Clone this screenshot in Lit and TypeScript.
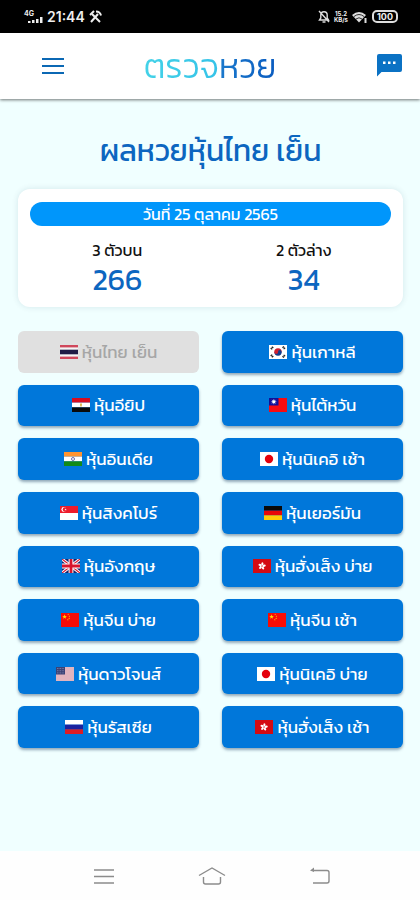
import { LitElement, html, css, svg, nothing } from "lit";
import { customElement, property } from "lit/decorators.js";

const star = (cx: number, cy: number, r: number, fill: string) => {
  const pts = Array.from({ length: 10 }, (_, i) => {
    const a = (Math.PI / 5) * i - Math.PI / 2;
    const d = i % 2 ? r * 0.4 : r;
    return `${(cx + d * Math.cos(a)).toFixed(2)},${(cy + d * Math.sin(a)).toFixed(2)}`;
  }).join(" ");
  return svg`<polygon points=${pts} fill=${fill}></polygon>`;
};

const bands = (...colors: string[]) =>
  colors.map((c, i) => svg`<rect x="0" y=${(i * 14) / colors.length} width="18" height=${14 / colors.length} fill=${c}></rect>`);

const flags: Record<string, unknown> = {
  th: svg`<rect width="18" height="14" fill="#d0485c"></rect><rect y="2.4" width="18" height="9.2" fill="#f4f4f4"></rect><rect y="4.7" width="18" height="4.6" fill="#201c46"></rect>`,
  eg: svg`${bands("#d80d20", "#ffffff", "#0a0a0a")}<path d="M8 5.4h2l-.3 3H8.300z" fill="#d8b040"></path>`,
  in: svg`${bands("#ff9430", "#ffffff", "#128a18")}<circle cx="9" cy="7" r="1.500" fill="none" stroke="#4a4a9a" stroke-width=".8"></circle>`,
  sg: svg`${bands("#ee1c2c", "#ffffff")}<circle cx="3.800" cy="3.500" r="2.400" fill="#fff"></circle><circle cx="4.900" cy="3.500" r="2.200" fill="#ee1c2c"></circle>${star(5.6, 3.6, 1.2, "#fff")}`,
  gb: svg`<rect width="18" height="14" fill="#15246e"></rect><path d="M0 0L18 14M18 0L0 14" stroke="#fff" stroke-width="3"></path><path d="M0 0L18 14M18 0L0 14" stroke="#d8142c" stroke-width="1.100"></path><path d="M9 0V14M0 7H18" stroke="#fff" stroke-width="4.800"></path><path d="M9 0V14M0 7H18" stroke="#d8142c" stroke-width="2.800"></path>`,
  cn: svg`<rect width="18" height="14" fill="#f80b05"></rect>${star(3.6, 3.8, 2.5, "#ffd800")}${star(7.2, 1.5, 0.9, "#ffd800")}${star(8.4, 3.2, 0.9, "#ffd800")}${star(8.2, 5.3, 0.9, "#ffd800")}${star(6.8, 6.8, 0.9, "#ffd800")}`,
  us: svg`<rect width="18" height="14" fill="#f2dfe4"></rect><path d="M0 1H18M0 3H18M0 5H18M0 7H18M0 9H18M0 11H18M0 13H18" stroke="#d08a98" stroke-width="1"></path><rect width="9" height="7.500" fill="#3a4276"></rect><path d="M1 1.500H8M1 3.700H8M1 5.900H8" stroke="#9aa0c4" stroke-width=".7" stroke-dasharray=".8 .8"></path>`,
  ru: svg`${bands("#ffffff", "#1a22a0", "#dc1c24")}`,
  kr: svg`<rect width="18" height="14" fill="#fff"></rect><path d="M5.300 7a3.700 3.700 0 0 1 7.400 0z" fill="#d02030"></path><path d="M5.300 7a3.700 3.700 0 0 0 7.400 0z" fill="#143c8c"></path><circle cx="7.200" cy="7.200" r="1.800" fill="#d02030"></circle><circle cx="10.800" cy="6.800" r="1.800" fill="#143c8c"></circle><path d="M2 4.200L4.200 1.700M13.800 1.700L16 4.200M2 9.800L4.200 12.300M13.800 12.300L16 9.800" stroke="#222" stroke-width="2" stroke-dasharray="1.300 .4"></path>`,
  tw: svg`<rect width="18" height="14" fill="#f80b10"></rect><rect width="9.500" height="7.500" fill="#10109a"></rect><circle cx="4.800" cy="3.700" r="1.500" fill="#fff"></circle><path d="M4.800 1.200V6.200M2.300 3.700H7.300M3 1.900L6.600 5.500M6.600 1.900L3 5.500" stroke="#fff" stroke-width=".6"></path>`,
  jp: svg`<rect width="18" height="14" fill="#fff"></rect><circle cx="9" cy="7" r="4.200" fill="#e4000c"></circle>`,
  de: svg`${bands("#0a0a0a", "#e80808", "#ffcc08")}`,
  hk: svg`<rect width="18" height="14" fill="#d40a12"></rect>${[0, 72, 144, 216, 288].map(
    (a) => svg`<ellipse cx="9.400" cy="5" rx="1.100" ry="1.800" fill="#fff" transform="rotate(${a} 9 7)"></ellipse>`
  )}<circle cx="9" cy="7" r=".6" fill="#d40a12"></circle>`,
};

@customElement("market-button")
class MarketButton extends LitElement {
  @property() flag = "";
  @property() label = "";
  @property({ type: Boolean }) current = false;

  static styles = css`
    :host { display: flex; min-width: 0; }
    button {
      flex: 1;
      display: flex;
      align-items: center;
      justify-content: center;
      gap: 4px;
      min-width: 0;
      padding: 0 8px;
      border: 0;
      border-radius: 6px;
      background: #0077da;
      color: #fff;
      font: 400 17px/24px Kanit, Prompt, "Noto Sans Thai", "Noto Sans", sans-serif;
      white-space: nowrap;
      box-shadow: 0 2px 3px rgba(0, 40, 80, 0.4);
      cursor: pointer;
    }
    button:disabled {
      background: #e0e0e0;
      color: #a6a6a6;
      box-shadow: none;
      cursor: default;
    }
    svg { flex: none; width: 18px; height: 14px; }
  `;

  render() {
    return html`<button type="button" ?disabled=${this.current}>
      <svg viewBox="0 0 18 14" aria-hidden="true">${flags[this.flag] ?? nothing}</svg>
      <span>${this.label}</span>
    </button>`;
  }
}

@customElement("app-root")
class AppRoot extends LitElement {
  private markets = [
    { flag: "th", label: "หุ้นไทย เย็น", current: true },
    { flag: "kr", label: "หุ้นเกาหลี" },
    { flag: "eg", label: "หุ้นอียิป" },
    { flag: "tw", label: "หุ้นไต้หวัน" },
    { flag: "in", label: "หุ้นอินเดีย" },
    { flag: "jp", label: "หุ้นนิเคอิ เช้า" },
    { flag: "sg", label: "หุ้นสิงคโปร์" },
    { flag: "de", label: "หุ้นเยอร์มัน" },
    { flag: "gb", label: "หุ้นอังกฤษ" },
    { flag: "hk", label: "หุ้นฮั่งเส็ง บ่าย" },
    { flag: "cn", label: "หุ้นจีน บ่าย" },
    { flag: "cn", label: "หุ้นจีน เช้า" },
    { flag: "us", label: "หุ้นดาวโจนส์" },
    { flag: "jp", label: "หุ้นนิเคอิ บ่าย" },
    { flag: "ru", label: "หุ้นรัสเซีย" },
    { flag: "hk", label: "หุ้นฮั่งเส็ง เช้า" },
  ];

  static styles = css`
    :host {
      display: flex;
      flex-direction: column;
      min-height: 100vh;
      background: #f0ffff;
      color: #111;
      font-family: Kanit, Prompt, "Noto Sans Thai", "Noto Sans", sans-serif;
    }
    svg { display: block; }
    .status {
      display: flex;
      align-items: center;
      justify-content: space-between;
      height: 33px;
      padding: 0 22px 0 24px;
      background: #000;
      color: #eee;
    }
    .status-group { display: flex; align-items: center; gap: 4px; }
    .signal { display: flex; flex-direction: column; font: 700 7px/7px Inter, sans-serif; }
    .bars { align-self: flex-end; margin-left: 4px; }
    .clock { font: 600 14px/16px Inter, sans-serif; }
    .rate { font: 700 6px/6px Inter, sans-serif; text-align: center; }
    .battery {
      padding: 0 3px;
      border: 2px solid #ddd;
      border-radius: 5px;
      font: 700 9px/9px Inter, sans-serif;
    }
    .top {
      display: grid;
      grid-template-columns: 1fr auto 1fr;
      align-items: center;
      height: 66px;
      padding: 0 16px;
      background: #fff;
      box-shadow: 0 1px 3px rgba(0, 0, 0, 0.55);
      position: relative;
    }
    .icon {
      display: block;
      padding: 0;
      border: 0;
      background: none;
      cursor: pointer;
    }
    .menu { justify-self: start; margin-left: 25px; }
    .chat { justify-self: end; }
    .logo {
      font-size: 34px;
      font-weight: 300;
      line-height: 44px;
      text-decoration: none;
      background: linear-gradient(90deg, #43d2e8 0%, #35c3e8 56%, #1a78cc 58%, #0a5cc0 100%);
      background-clip: text;
      -webkit-background-clip: text;
      color: transparent;
    }
    main {
      flex: 1;
      display: flex;
      flex-direction: column;
      padding: 30px 17px 103px 18px;
    }
    h1 {
      margin: 0 0 16px;
      font-size: 30px;
      line-height: 44px;
      font-weight: 400;
      text-align: center;
      color: #0c66c0;
    }
    .card {
      padding: 13px 12px 9px;
      border-radius: 12px;
      background: #fff;
      box-shadow: 0 0 6px rgba(0, 60, 80, 0.12);
      text-align: center;
    }
    .date {
      margin: 0;
      border-radius: 12px;
      background: #0096fb;
      color: #fff;
      font-size: 16px;
      line-height: 24px;
      font-weight: 400;
    }
    .results { display: grid; grid-template-columns: 1fr 1fr; margin: 12px -6px 0; }
    dt { font-size: 16px; line-height: 24px; }
    dd { margin: 0; font-size: 30px; line-height: 36px; color: #0c66c0; }
    .markets {
      flex: 1;
      display: grid;
      grid-template-columns: 1fr 1fr;
      grid-auto-rows: minmax(40px, 1fr);
      gap: 12px 23px;
      margin-top: 24px;
    }
    .nav {
      display: grid;
      grid-template-columns: repeat(3, 108px);
      justify-content: center;
      justify-items: center;
      align-items: center;
      height: 49px;
      padding-left: 4px;
      background: #fefefe;
    }
  `;

  render() {
    return html`
      <div class="status">
        <div class="status-group">
          <div class="signal">
            <span>4G</span>
            <svg class="bars" width="15" height="6" viewBox="0 0 15 6" fill="#eee" aria-hidden="true">
              <path d="M0 4h2.500v2H0zM4 3h2.500v3H4zM8 2h2.500v4H8zM12 0h2.500v6H12z"></path>
            </svg>
          </div>
          <span class="clock">21:44</span>
          <svg width="13" height="13" viewBox="0 0 13 13" fill="none" stroke="#eee" stroke-width="2" aria-hidden="true">
            <path d="M2 12L9 4M3 4l8 8"></path><path d="M1 5l4-4M7 1.500q4 0 5 4"></path>
          </svg>
        </div>
        <div class="status-group">
          <svg width="12" height="13" viewBox="0 0 12 13" fill="none" stroke="#ddd" stroke-width="1.400" aria-hidden="true">
            <path d="M1.500 10h9l-1.300-2V5a3.200 3.200 0 0 0-6.400 0v3zM4.500 12h3M1 1l10 11"></path>
          </svg>
          <div class="rate">15.2<br />KB/s</div>
          <svg width="16" height="12" viewBox="0 0 16 12" aria-hidden="true">
            <path d="M0 4Q7-2 14 4L7 11.500z" fill="#ddd"></path>
            <path d="M2 5.500q5-4 10 0M4 8q3-2.500 6 0" fill="none" stroke="#000" stroke-width=".8"></path>
            <path d="M12.500 7h2v5h-2z" fill="#ddd"></path>
          </svg>
          <span class="battery">100</span>
        </div>
      </div>

      <header class="top">
        <button class="icon menu" type="button" aria-label="เมนู">
          <svg width="24" height="24" viewBox="0 0 24 24" stroke="#0b68b4" stroke-width="2">
            <path d="M1 5H23M1 12H23M1 19H23"></path>
          </svg>
        </button>
        <a class="logo" href="#">ตรวจหวย</a>
        <button class="icon chat" type="button" aria-label="แชท">
          <svg width="28" height="28" viewBox="0 0 28 28">
            <path d="M3 2H24a2 2 0 0 1 2 2V18a2 2 0 0 1-2 2H5.500L1 24.500V4A2 2 0 0 1 3 2z" fill="#0b72c4"></path>
            <path d="M7 9.500h2.500V12H7zM12 9.500h2.500V12h-2.500zM17 9.500h2.500V12h-2.500z" fill="#fff"></path>
          </svg>
        </button>
      </header>

      <main>
        <h1>ผลหวยหุ้นไทย เย็น</h1>
        <section class="card">
          <h2 class="date">วันที่ 25 ตุลาคม 2565</h2>
          <dl class="results">
            <div><dt>3 ตัวบน</dt><dd>266</dd></div>
            <div><dt>2 ตัวล่าง</dt><dd>34</dd></div>
          </dl>
        </section>
        <div class="markets">
          ${this.markets.map(
            (m) => html`<market-button .flag=${m.flag} .label=${m.label} .current=${!!m.current}></market-button>`
          )}
        </div>
      </main>

      <nav class="nav">
        <button class="icon" type="button" aria-label="แอปล่าสุด">
          <svg width="22" height="20" viewBox="0 0 22 20" stroke="#8c8c8c" stroke-width="1.400">
            <path d="M1 4H21M1 10.500H21M1 17H21"></path>
          </svg>
        </button>
        <button class="icon" type="button" aria-label="หน้าหลัก">
          <svg width="28" height="20" viewBox="0 0 28 20" fill="none" stroke="#8c8c8c" stroke-width="1.400">
            <path d="M1 9.500L14 2L27 9.500M5.500 11V16a2 2 0 0 0 2 2H20.500a2 2 0 0 0 2-2V11"></path>
          </svg>
        </button>
        <button class="icon" type="button" aria-label="ย้อนกลับ">
          <svg width="22" height="20" viewBox="0 0 22 20" fill="none" stroke="#8c8c8c" stroke-width="1.400">
            <path d="M4 4.500H18a2 2 0 0 1 2 2V15a2 2 0 0 1-2 2H4"></path>
            <path d="M5 1.500V6L1 4.500z" fill="#8c8c8c" stroke="none"></path>
          </svg>
        </button>
      </nav>
    `;
  }
}
